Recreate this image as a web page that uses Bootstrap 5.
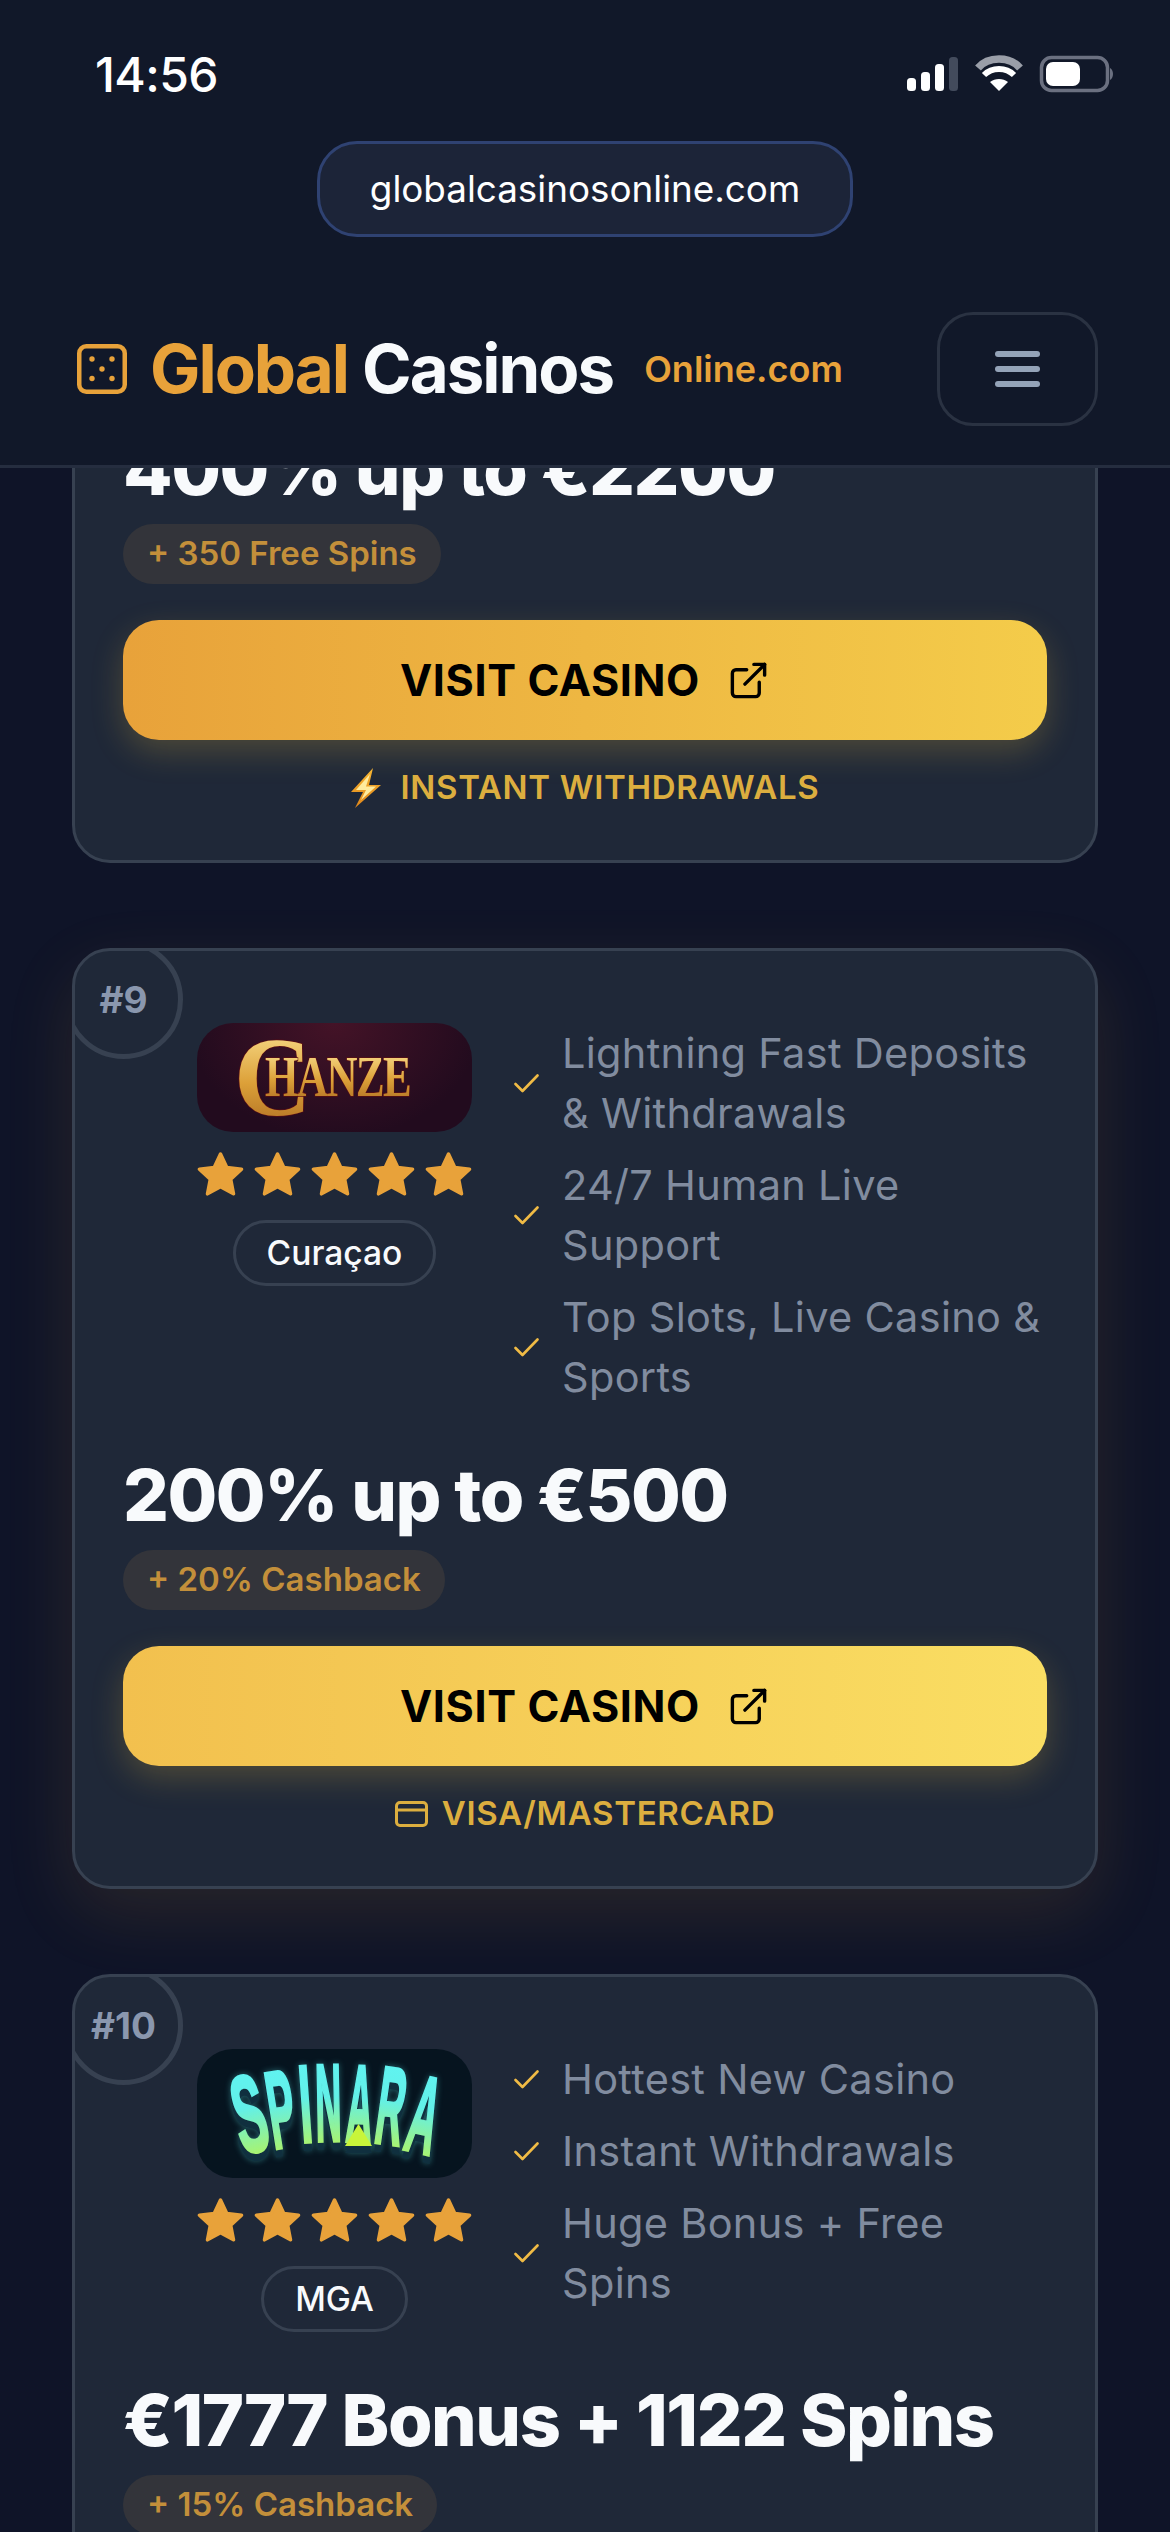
<!DOCTYPE html>
<html lang="en">
<head>
  <meta charset="UTF-8">
  <meta name="viewport" content="width=device-width, initial-scale=1.0">
  <title>Global Casinos Online.com</title>
  <link href="https://cdn.jsdelivr.net/npm/bootstrap@5.3.0/dist/css/bootstrap.min.css" rel="stylesheet">
  <style>
    html, body { height: 2532px; overflow: hidden; }
    body { background: #0f1428; font-family: Inter, "Liberation Sans", sans-serif; color: #fff; }
    .top-area { background: #111829; height: 468px; border-bottom: 3px solid #252d3f; }
    .status-row { height: 141px; padding: 46px 55px 0 95px; }
    .status-row svg { margin-top: 9px; }
    .status-time { font-size: 48px; font-weight: 500; line-height: 57px; letter-spacing: -.6px; }
    .url-row { height: 140px; }
    .url-pill { width: 536px; height: 96px; background: #1c2438; border: 3px solid #2f4272; border-radius: 40px; font-size: 36.8px; }
    .main-bar { padding: 0 72px 0 77px; height: 176px; }
    .brand-text { font-size: 67.2px; font-weight: 700; letter-spacing: -2px; color: #f8fafc; margin-left: 23px; line-height: 1; }
    .brand-text span { color: #e8a23a; }
    .brand-sub { font-size: 36px; font-weight: 600; color: #e8a23a; margin-left: 31px; }
    .menu-btn { width: 161px; height: 114px; gap: 9px; border: 3px solid #2a3242; border-radius: 36px; background: transparent; padding: 0; }
    .menu-btn i { display: block; width: 45px; height: 6px; border-radius: 3px; background: #94a3b8; }
    .scroll-area { height: 2064px; overflow: hidden; padding: 0 72px; }
    .casino-card { position: relative; overflow: hidden; background: #1f2838; border: 3px solid #374151; border-radius: 38px; padding: 72px 48px 46px; margin-bottom: 85px; }
    .casino-card.first-card { margin-top: -48px; padding-top: 0; }
    .casino-card.glow-card { overflow: visible; box-shadow: 0 24px 70px rgba(232, 162, 58, .12); }
    .rank-clip { position: absolute; inset: 0; overflow: hidden; border-radius: 35px; pointer-events: none; }
    .rank-ring { position: absolute; left: -11px; top: -11px; width: 119px; height: 119px; border: 5px solid #374151; border-radius: 50%; font-size: 37px; font-weight: 700; color: #8a97ae; }
    .left-col { width: 349px; padding-left: 74px; flex-shrink: 0; margin-right: 42px; }
    .logo-box { width: 275px; border-radius: 36px; }
    .logo-box svg { display: block; overflow: visible; }
    .logo-chanze { height: 109px; background: radial-gradient(ellipse at 50% 0, #441327, #220b1e 75%); }
    .logo-spinara { height: 129px; background: #06141f; }
    .spin-art { filter: drop-shadow(0 7px 0 #10303f) drop-shadow(0 0 3px rgba(95, 245, 245, .35)); }
    .star-row { width: 275px; margin: 20px 0 23px; }
    .license-pill { border: 3px solid #374151; border-radius: 33px; height: 66px; padding: 0 31px; font-size: 33.6px; font-weight: 500; color: #f8fafc; }
    .feature-list { gap: 12px; }
    .feature-list li { gap: 23px; font-size: 41.5px; line-height: 60px; color: #818c9f; letter-spacing: .3px; }
    .feature-list svg { flex-shrink: 0; }
    .price-line { font-size: 72px; font-weight: 800; line-height: 92px; margin: 42px 0 9px; color: #f8fafc; letter-spacing: -.02em; }
    .first-card .price-line { margin-top: 0; }
    .bonus-pill { height: 60px; padding: 0 24px; border-radius: 30px; background: #33343a; color: #c38f3a; font-size: 33px; font-weight: 600; }
    .visit-btn { margin-top: 36px; height: 120px; border: 0; border-radius: 36px; font-size: 43.2px; font-weight: 700; color: #000; letter-spacing: .6px; gap: 27px; box-shadow: 0 12px 32px rgba(240, 190, 60, .22); }
    .visit-a { background: linear-gradient(90deg, #e8a23a, #f4cc4a); }
    .visit-b { background: linear-gradient(90deg, #f2c04e, #fade63); }
    .pay-line { margin-top: 22px; height: 52px; gap: 14px; font-size: 33px; font-weight: 600; letter-spacing: .7px; color: #dcae3f; }
    .bolt-icon { margin-right: 6px; }
  </style>
</head>
<body>
  <div class="top-area">
    <div class="status-row d-flex justify-content-between">
      <div class="status-time">14:56</div>
      <svg width="208" height="40" viewBox="0 0 208 40" class="d-block">
        <g fill="#fff">
          <rect x="0" y="23" width="9" height="13" rx="3.5"/><rect x="14" y="17" width="9" height="19" rx="3.5"/><rect x="28" y="9" width="9" height="27" rx="3.5"/>
        </g>
        <rect x="42" y="2" width="9" height="34" rx="3.5" fill="#434b5c"/>
        <path d="M71 13 C81 1 103 1 113 13" fill="none" stroke="#9a9ea8" stroke-width="7.5"/>
        <path d="M77 20 C85 12 99 12 107 20" fill="none" stroke="#fff" stroke-width="6"/>
        <path d="M92 36 L83 27 C88 23 96 23 101 27 Z" fill="#fff"/>
        <rect x="134.5" y="2.5" width="66" height="33" rx="10" fill="none" stroke="#6b7080" stroke-width="3.5"/>
        <rect x="139" y="7" width="34" height="24" rx="7" fill="#fff"/>
        <path d="M203 13 C207 15 207 23 203 25 Z" fill="#6b7080"/>
      </svg>
    </div>
    <div class="url-row d-flex justify-content-center align-items-start">
      <div class="url-pill d-flex align-items-center justify-content-center">globalcasinosonline.com</div>
    </div>
    <nav class="main-bar d-flex align-items-center justify-content-between">
      <div class="d-flex align-items-center">
        <svg width="50" height="50" viewBox="0 0 50 50" class="d-block">
          <rect x="2.25" y="2.25" width="45.5" height="45.5" rx="7" fill="none" stroke="#e8a23a" stroke-width="4.5"/>
          <g fill="#e8a23a"><circle cx="15" cy="15" r="2.7"/><circle cx="35" cy="15" r="2.7"/><circle cx="25" cy="25" r="2.7"/><circle cx="15" cy="34.5" r="2.7"/><circle cx="35" cy="34.5" r="2.7"/></g>
        </svg>
        <div class="brand-text"><span>Global</span> Casinos</div>
        <div class="brand-sub">Online.com</div>
      </div>
      <button class="menu-btn d-flex flex-column align-items-center justify-content-center" type="button" aria-label="Menu"><i></i><i></i><i></i></button>
    </nav>
  </div>

  <div class="scroll-area">
    <!-- first card is scrolled under the header -->
    <div class="casino-card first-card">
      <div class="price-line">400% up to €2200</div>
      <div class="d-flex"><span class="bonus-pill d-flex align-items-center">+ 350 Free Spins</span></div>
      <a class="visit-btn visit-a d-flex align-items-center justify-content-center text-decoration-none" href="#">VISIT CASINO
        <svg width="43" height="43" viewBox="0 0 24 24" fill="none" stroke="#000" stroke-width="1.9" stroke-linecap="round" stroke-linejoin="round"><path d="M18 13v6a2 2 0 0 1-2 2H5a2 2 0 0 1-2-2V8a2 2 0 0 1 2-2h6"/><path d="M15 3h6v6"/><path d="M10 14 21 3"/></svg>
      </a>
      <div class="pay-line d-flex align-items-center justify-content-center">
        <svg class="bolt-icon" width="30" height="40" viewBox="0 0 30 40"><defs><linearGradient id="boltFill" x1="0" y1="0" x2="0" y2="1"><stop offset="0" stop-color="#f7b733"/><stop offset="1" stop-color="#e0861a"/></linearGradient></defs><path d="M22 0 0 24h12L4 40 30 17H18Z" fill="url(#boltFill)"/><path d="M19 6 5 22h10L10 32 25 18.500H15Z" fill="#ffec9e"/></svg>
        <span>INSTANT WITHDRAWALS</span>
      </div>
    </div>

    <div class="casino-card glow-card">
      <div class="rank-clip"><div class="rank-ring d-flex align-items-center justify-content-center">#9</div></div>
      <div class="d-flex">
        <div class="left-col d-flex flex-column align-items-center">
          <div class="logo-box logo-chanze">
            <svg width="275" height="109" viewBox="0 0 275 109" font-family="Liberation Serif, serif" font-weight="700" fill="url(#goldFill)" stroke="#5a0f14" stroke-width="1.5" paint-order="stroke">
              <defs><linearGradient id="goldFill" x1="0" y1="0" x2="0" y2="1"><stop offset=".1" stop-color="#f8dc8a"/><stop offset=".55" stop-color="#dca038"/><stop offset="1" stop-color="#a5651f"/></linearGradient></defs>
              <text transform="translate(37 92) scale(.95 1)" font-size="113">C</text>
              <text transform="translate(68 73) scale(.74 1)" font-size="58" letter-spacing="-2">HANZE</text>
            </svg>
          </div>
          <div class="star-row d-flex justify-content-between" data-stars></div>
          <div class="license-pill d-flex align-items-center">Curaçao</div>
        </div>
        <ul class="feature-list list-unstyled d-flex flex-column flex-grow-1 m-0">
          <li class="d-flex align-items-center" data-check>Lightning Fast Deposits &amp; Withdrawals</li>
          <li class="d-flex align-items-center" data-check>24/7 Human Live Support</li>
          <li class="d-flex align-items-center" data-check>Top Slots, Live Casino &amp; Sports</li>
        </ul>
      </div>
      <div class="price-line">200% up to €500</div>
      <div class="d-flex"><span class="bonus-pill d-flex align-items-center">+ 20% Cashback</span></div>
      <a class="visit-btn visit-b d-flex align-items-center justify-content-center text-decoration-none" href="#">VISIT CASINO
        <svg width="43" height="43" viewBox="0 0 24 24" fill="none" stroke="#000" stroke-width="1.9" stroke-linecap="round" stroke-linejoin="round"><path d="M18 13v6a2 2 0 0 1-2 2H5a2 2 0 0 1-2-2V8a2 2 0 0 1 2-2h6"/><path d="M15 3h6v6"/><path d="M10 14 21 3"/></svg>
      </a>
      <div class="pay-line d-flex align-items-center justify-content-center">
        <svg width="33" height="26" viewBox="0 0 33 26" fill="none" stroke="#dcae3f" stroke-width="3"><rect x="1.5" y="1.5" width="30" height="23" rx="3.5"/><path d="M1.5 9h30"/></svg>
        <span>VISA/MASTERCARD</span>
      </div>
    </div>

    <div class="casino-card">
      <div class="rank-clip"><div class="rank-ring d-flex align-items-center justify-content-center">#10</div></div>
      <div class="d-flex">
        <div class="left-col d-flex flex-column align-items-center">
          <div class="logo-box logo-spinara">
            <svg class="spin-art" width="275" height="129" viewBox="0 0 275 129" font-family="Liberation Sans, sans-serif" font-weight="700" font-size="50" text-anchor="middle" fill="url(#spinGrad)" stroke="url(#spinGrad)" stroke-width="1.6">
              <defs><linearGradient id="spinGrad" x1="0" y1="0" x2="0" y2="1"><stop offset="0" stop-color="#5ff5f5"/><stop offset=".45" stop-color="#62f0e8"/><stop offset="1" stop-color="#c8f53a"/></linearGradient></defs>
              <text transform="translate(61 102) rotate(-13) scale(.95 2.2)">S</text>
              <text transform="translate(90 98) rotate(-9) scale(.8 2.2)">P</text>
              <text transform="translate(111 93) rotate(-4) scale(.9 2.2)">I</text>
              <text transform="translate(132 92) rotate(-1) scale(.72 2.2)">N</text>
              <text transform="translate(161 93) rotate(3) scale(.72 2.2)">A</text>
              <text transform="translate(189 95) rotate(8) scale(.76 2.2)">R</text>
              <text transform="translate(219 103) rotate(13) scale(.8 2.2)">A</text>
              <path d="M148 97 161.500 75 175 97Z" fill="#c8f53a" stroke="none"/>
            </svg>
          </div>
          <div class="star-row d-flex justify-content-between" data-stars></div>
          <div class="license-pill d-flex align-items-center">MGA</div>
        </div>
        <ul class="feature-list list-unstyled d-flex flex-column flex-grow-1 m-0">
          <li class="d-flex align-items-center" data-check>Hottest New Casino</li>
          <li class="d-flex align-items-center" data-check>Instant Withdrawals</li>
          <li class="d-flex align-items-center" data-check>Huge Bonus + Free Spins</li>
        </ul>
      </div>
      <div class="price-line">€1777 Bonus + 1122 Spins</div>
      <div class="d-flex"><span class="bonus-pill d-flex align-items-center">+ 15% Cashback</span></div>
    </div>
  </div>

  <script src="https://cdn.jsdelivr.net/npm/bootstrap@5.3.0/dist/js/bootstrap.bundle.min.js"></script>
  <script>
    const star = '<svg width="47" height="45" viewBox="0 0 47 45"><path d="M23.5 2 29.8 15.4 44.5 17.2 33.7 27.3 36.5 41.8 23.5 34.6 10.5 41.8 13.3 27.3 2.5 17.2 17.2 15.4Z" fill="#e8a23a" stroke="#e8a23a" stroke-width="3.5" stroke-linejoin="round"/></svg>';
    document.querySelectorAll('[data-stars]').forEach(r => { r.innerHTML = star.repeat(5); });
    const check = '<svg width="25" height="19" viewBox="0 0 25 19" fill="none" stroke="#f0bb45" stroke-width="2.6" stroke-linecap="round" stroke-linejoin="round"><path d="M1.5 10 8.5 17 23.5 1.5"/></svg>';
    document.querySelectorAll('[data-check]').forEach(li => {
      li.innerHTML = check + '<span>' + li.innerHTML + '</span>';
    });
  </script>
</body>
</html>
